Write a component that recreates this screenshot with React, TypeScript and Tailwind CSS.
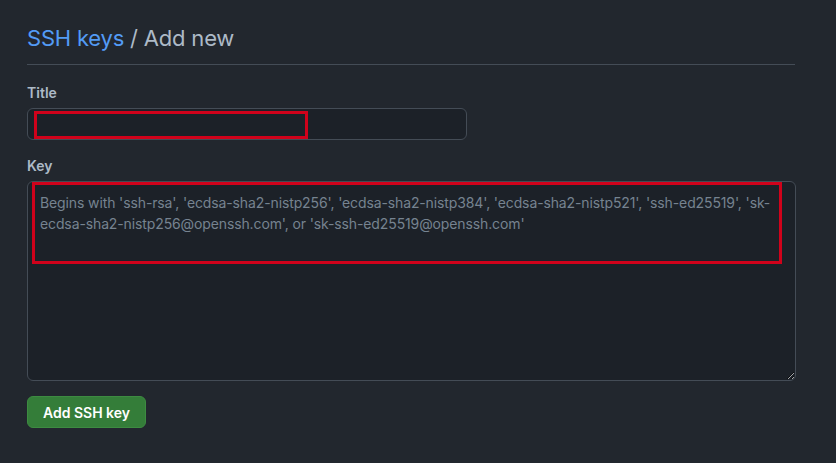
import React from 'react';

const App: React.FC = () => {
    return (
        <div
            className="min-h-[463px] w-full bg-[#22272e] text-[#adbac7]"
            style={{ fontFamily: 'Inter, "Liberation Sans", sans-serif' }}
        >
            <div className="w-[768px] pl-[27px] pt-[24px] box-content">
                {/* Page heading */}
                <div className="border-b border-[#444c56] pb-[12px]">
                    <h2 className="text-[22px] leading-[28px] font-normal tracking-[-0.2px]">
                        <a className="text-[#539bf5]">SSH keys</a>
                        <span className="text-[#adbac7]"> / Add new</span>
                    </h2>
                </div>

                <form className="pt-[18px]">
                    <label className="block text-[14px] leading-[20px] font-semibold text-[#adbac7]">Title</label>
                    <div className="relative mt-[5px] w-[440px]">
                        <input
                            type="text"
                            className="block h-[32px] w-full rounded-md border border-[#444c56] bg-[#1c2128] px-3 text-[14px] text-[#adbac7] outline-none"
                        />
                        <div className="pointer-events-none absolute left-[7px] top-[3px] h-[28px] w-[274px] border-[3px] border-[#d0021b]" />
                    </div>

                    <label className="mt-[16px] block text-[14px] leading-[20px] font-semibold text-[#adbac7]">Key</label>
                    <div className="relative mt-[5px] w-[769px]">
                        <textarea
                            className="block h-[200px] w-full rounded-md border border-[#444c56] bg-[#1c2128] px-3 pt-[10px] pb-[8px] text-[14px] leading-[21px] tracking-[-0.12px] text-[#adbac7] outline-none placeholder:text-[#768390]"
                            placeholder="Begins with 'ssh-rsa', 'ecdsa-sha2-nistp256', 'ecdsa-sha2-nistp384', 'ecdsa-sha2-nistp521', 'ssh-ed25519', 'sk-ecdsa-sha2-nistp256@openssh.com', or 'sk-ssh-ed25519@openssh.com'"
                        />
                        <div className="pointer-events-none absolute left-[5px] top-[1px] h-[82px] w-[750px] border-[3px] border-[#d0021b]" />
                    </div>

                    <button
                        type="button"
                        className="mt-[15px] h-[32px] w-[119px] rounded-md border border-[#3d8b41] bg-[#347d39] text-[14px] font-semibold text-white"
                    >
                        Add SSH key
                    </button>
                </form>
            </div>
        </div>
    );
};

export default App;
